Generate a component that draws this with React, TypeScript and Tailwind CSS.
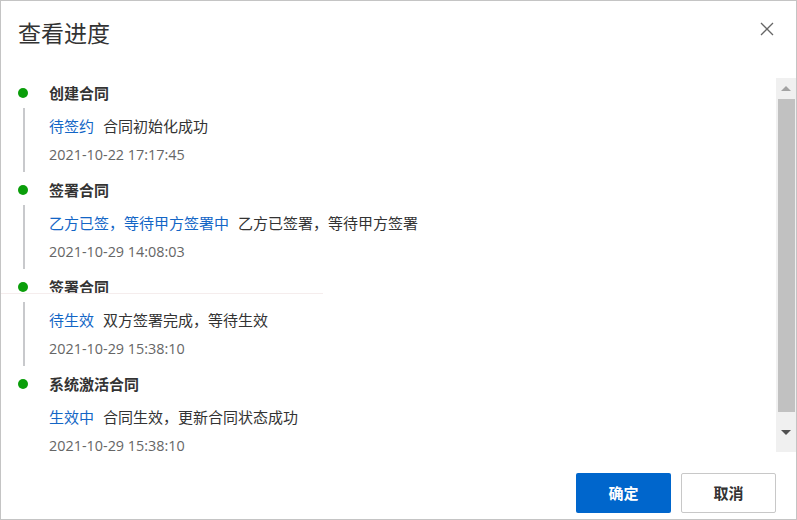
import React from "react";

type Step = {
  title: string;
  status: string;
  message: string;
  time: string;
};

const steps: Step[] = [
  { title: "创建合同", status: "待签约", message: "合同初始化成功", time: "2021-10-22 17:17:45" },
  {
    title: "签署合同",
    status: "乙方已签，等待甲方签署中",
    message: "乙方已签署，等待甲方签署",
    time: "2021-10-29 14:08:03",
  },
  { title: "签署合同", status: "待生效", message: "双方签署完成，等待生效", time: "2021-10-29 15:38:10" },
  { title: "系统激活合同", status: "生效中", message: "合同生效，更新合同状态成功", time: "2021-10-29 15:38:10" },
];

const font = { fontFamily: '"Open Sans", "Noto Sans CJK SC", sans-serif' };

function TimelineItem({ step, last }: { step: Step; last: boolean }) {
  return (
    <div className="grid h-[97px] grid-cols-[48px_1fr]">
      <div className="flex flex-col">
        <div className="ml-[17px] mt-[10px] h-[10px] w-[10px] rounded-full bg-[#0a9e0a]" />
        {!last && <div className="ml-[22px] mt-[10px] h-[64px] w-[2px] bg-[#c8c9cc]" />}
      </div>
      <div className="flex flex-col">
        <div className="h-[30px] text-[15px] font-bold leading-[30px] text-[#333]">{step.title}</div>
        <div className="mt-[3px] flex h-[30px] items-center gap-[9px] text-[15px] leading-[30px]">
          <span className="text-[#1366c6]">{step.status}</span>
          <span className="text-[#333]">{step.message}</span>
        </div>
        <div className="mt-[6px] h-[16px] text-[14.4px] leading-[16px] text-[#666]">{step.time}</div>
      </div>
    </div>
  );
}

function Scrollbar() {
  return (
    <div className="flex h-full w-[20px] flex-col items-center bg-[#f0f0f0]">
      <div className="flex h-[21px] w-full items-center justify-center">
        <div className="h-0 w-0 border-x-[5px] border-b-[5px] border-x-transparent border-b-[#a3a3a3]" />
      </div>
      <div className="ml-[1px] h-[313px] w-[17px] bg-[#c1c1c1]" />
      <div className="flex w-full flex-1 items-center justify-center">
        <div className="h-0 w-0 border-x-[5px] border-t-[5px] border-x-transparent border-t-[#505050]" />
      </div>
    </div>
  );
}

export default function App() {
  return (
    <div
      className="relative flex h-[520px] w-[797px] flex-col border border-[#c4c4c4] bg-white"
      style={font}
    >
      <div className="flex h-[77px] items-start justify-between pl-[17px] pr-[22px] pt-[17px]">
        <h2 className="text-[23px] leading-[30px] text-[#333]">查看进度</h2>
        <button className="mt-[4px] text-[#666]" aria-label="关闭">
          <svg width="14" height="14" viewBox="0 0 14 14" fill="none">
            <path d="M1 1L13 13M13 1L1 13" stroke="currentColor" strokeWidth="1.3" />
          </svg>
        </button>
      </div>

      <div className="flex h-[374px]">
        <div className="relative flex-1">
          {steps.map((step, i) => (
            <TimelineItem key={i} step={step} last={i === steps.length - 1} />
          ))}
          <div className="absolute left-0 top-[215px] h-[3px] w-[322px] border-t border-[#f5eded] bg-white" />
        </div>
        <Scrollbar />
      </div>

      <div className="flex justify-end gap-[10px] pr-[20px] pt-[21px]">
        <button className="h-[40px] w-[95px] rounded-[2px] bg-[#0066cc] text-[15px] font-bold text-white">
          确定
        </button>
        <button className="h-[40px] w-[95px] rounded-[2px] border border-[#c8c8c8] bg-white text-[15px] font-bold text-[#333]">
          取消
        </button>
      </div>
    </div>
  );
}
